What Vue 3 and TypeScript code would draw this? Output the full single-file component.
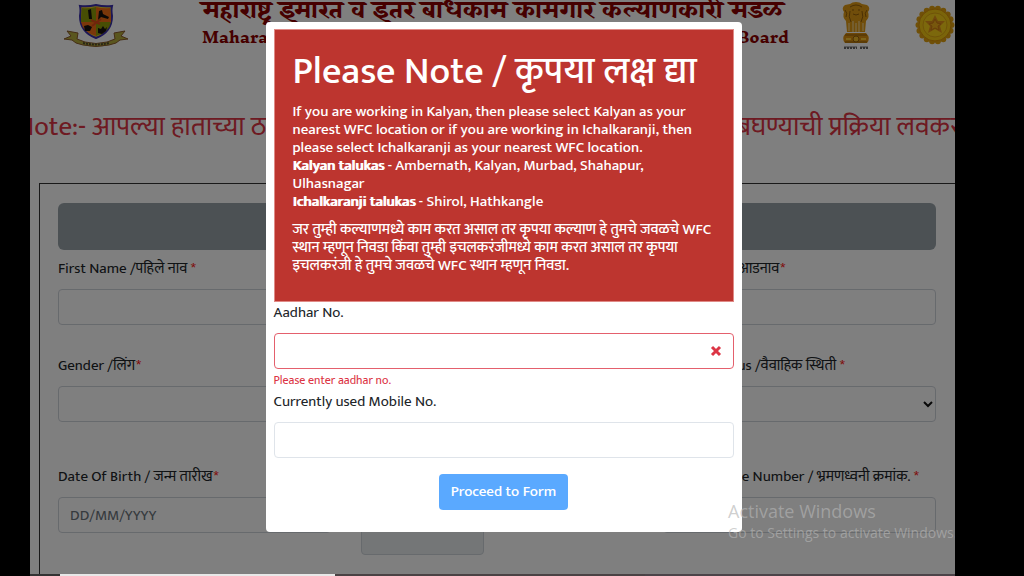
<script setup lang="ts">
import { ref } from 'vue'

interface Field {
  id: string
  label: string
  space: boolean
  kind: 'text' | 'select' | 'action'
  placeholder?: string
}

const rows: Field[][] = [
  [
    { id: 'first', label: 'First Name /पहिले नाव', space: true, kind: 'text' },
    { id: 'middle', label: 'Middle Name /वडिलांचे नाव', space: false, kind: 'text' },
    { id: 'last', label: 'Last Name /आडनाव', space: false, kind: 'text' },
  ],
  [
    { id: 'gender', label: 'Gender /लिंग', space: false, kind: 'select' },
    { id: 'age', label: 'Age /वय', space: false, kind: 'text' },
    { id: 'marital', label: 'Marital Status /वैवाहिक स्थिती', space: true, kind: 'select' },
  ],
  [
    { id: 'dob', label: 'Date Of Birth / जन्म तारीख', space: false, kind: 'text', placeholder: 'DD/MM/YYYY' },
    { id: 'check', label: '', space: false, kind: 'action' },
    { id: 'phone', label: 'Mobile Phone Number / भ्रमणध्वनी क्रमांक.', space: true, kind: 'text' },
  ],
]

const aadhar = ref('')
const mobile = ref('')
const petals = Array.from({ length: 18 }, (_, i) => {
  const a = (i * Math.PI) / 9
  return { x: 20 + 16.5 * Math.cos(a), y: 20 + 16.5 * Math.sin(a) }
})
</script>

<template>
  <div class="screen">
    <div class="window">
      <div class="page">
        <header class="header">
          <svg class="crest" viewBox="0 0 66 44" aria-hidden="true">
            <path d="M4 27 L15 29 L14 35 L22 38 Q33 41 44 38 L52 35 L51 29 L62 27 L58 32 L65 35 L57 36 L53 39 L46 41 Q33 44 20 41 L13 39 L9 36 L1 35 L8 32Z" fill="#b5ad3c" stroke="#8a5a2a" stroke-width="1" />
            <path d="M17 2 Q25 3 33 1 Q41 3 49 2 Q48 6 49 12 Q49 28 33 34 Q17 28 17 12 Q18 6 17 2Z" fill="#e8c72c" stroke="#3a2fac" stroke-width="2" />
            <path d="M19 4 Q26 5 33 3 V18 H18 Q18 10 19 4Z" fill="#8f9c08" />
            <path d="M33 3 Q40 5 47 4 Q48 10 48 18 H33Z" fill="#f56f14" />
            <path d="M18 18 H33 V32 Q20 28 18 18Z" fill="#f56f14" />
            <path d="M33 18 H48 Q46 28 33 32Z" fill="#8f9c08" />
            <path d="M25 6 L28 5 L29 15 L26 15Z M36 7 L39 6 L40 10 L46 13 L45 15 L38 13 L35 16Z M21 22 L25 21 L29 23 L27 27 L22 27Z M35 29 V24 L38 25 L40 22 L42 25 L44 23 L43 27 L39 30Z" fill="#16110c" />
            <path d="M28 16 L37 20 M38 15 L29 22" stroke="#e04a18" stroke-width="2" />
            <path d="M20 39 Q33 42 46 39" fill="none" stroke="#544d2c" stroke-width="2" stroke-dasharray="2 1" />
          </svg>
          <div class="titles">
            <h2>महाराष्ट्र इमारत व इतर बांधकाम कामगार कल्याणकारी मंडळ</h2>
            <h3><span>Maharashtra Building And Other</span><span>Worker's Welfare Board</span></h3>
          </div>
          <svg class="emblem" viewBox="0 0 32 50" aria-hidden="true">
            <path d="M10 3 Q12 1 16 1 Q20 1 22 3 L27 4 Q31 7 28 11 Q30 16 26 20 L25 31 H7 L6 20 Q2 16 4 11 Q1 7 5 4Z" fill="#e09a14" />
            <path d="M10 6 Q16 2 22 6 M12 9 H14 M18 9 H20 M13 13 Q16 15 19 13 M5 9 Q8 12 6 16 M27 9 Q24 12 26 16 M10 10 Q8 16 11 21 M22 10 Q24 16 21 21" fill="none" stroke="#96600a" stroke-width="1" />
            <path d="M9 22 V30 M13 20 V31 M16 22 V31 M19 20 V31 M23 22 V30" stroke="#f5dfa8" stroke-width="1" />
            <path d="M6 32 H26 Q31 37 27 42 H5 Q1 37 6 32Z" fill="#dc900e" />
            <path d="M5 34 H27 M5 41 H27" stroke="#96600a" />
            <circle cx="16" cy="38" r="3" fill="#f0b828" stroke="#96600a" />
            <path d="M6 38 H11 M21 38 H26" stroke="#f8c838" stroke-width="2" />
            <path d="M4 46 H17 M20 46 H28" stroke="#777" stroke-width="1" />
            <path d="M4 47 H17 M20 47 H28" stroke="#666" stroke-width="2" stroke-dasharray="2 1" />
          </svg>
          <svg class="seal" viewBox="0 0 40 40" aria-hidden="true">
            <circle v-for="(p, i) in petals" :key="i" :cx="p.x" :cy="p.y" r="3" fill="#e0a010" />
            <circle cx="20" cy="20" r="16" fill="#f5c814" stroke="#d8900a" />
            <circle cx="20" cy="20" r="12" fill="#f8d018" stroke="#e0a812" />
            <path d="M20 10 L23 16 L30 16 L25 21 L27 28 L20 24 L13 28 L15 21 L10 16 L17 16Z" fill="#e0901a" />
            <path d="M20 14 L22 18 L26 19 L23 21 L24 25 L20 23 L16 25 L17 21 L14 19 L18 18Z" fill="#eeae1a" stroke="#cf7c14" stroke-width="1" />
          </svg>
        </header>

        <div class="ticker">
          <span class="ticker-start">Note:- आपल्या हाताच्या ठशांची</span>
          <span class="ticker-end">बघण्याची प्रक्रिया लवकरात</span>
        </div>

        <form class="form" @submit.prevent>
          <div class="bar"></div>
          <div v-for="(row, r) in rows" :key="r" class="row">
            <div v-for="f in row" :key="f.id" class="field">
              <template v-if="f.kind === 'action'">
                <button class="check" type="button" disabled aria-label="Check"></button>
              </template>
              <template v-else>
                <label :for="f.id">{{ f.label }}<i v-if="f.space">&nbsp;</i><i>*</i></label>
                <span v-if="f.kind === 'select'" class="select">
                  <select :id="f.id"></select>
                  <svg viewBox="0 0 10 8" aria-hidden="true"><path d="M1 2 L5 6 L9 2" /></svg>
                </span>
                <input v-else :id="f.id" type="text" :placeholder="f.placeholder" />
              </template>
            </div>
          </div>
        </form>
      </div>

      <div class="backdrop">
        <section class="modal" role="dialog" aria-modal="true" aria-labelledby="note-title">
          <div class="note">
            <h1 id="note-title">Please Note / कृपया लक्ष द्या</h1>
            <p>
              If you are working in Kalyan, then please select Kalyan as your nearest WFC location or if you are working
              in Ichalkaranji, then please select Ichalkaranji as your nearest WFC location.<br />
              <b>Kalyan talukas</b> - Ambernath, Kalyan, Murbad, Shahapur, Ulhasnagar<br />
              <b>Ichalkaranji talukas</b> - Shirol, Hathkangle
            </p>
            <p>
              जर तुम्ही कल्याणमध्ये काम करत असाल तर कृपया कल्याण हे तुमचे जवळचे WFC स्थान म्हणून निवडा किंवा तुम्ही
              इचलकरंजीमध्ये काम करत असाल तर कृपया इचलकरंजी हे तुमचे जवळचे WFC स्थान म्हणून निवडा.
            </p>
          </div>
          <form class="ask" @submit.prevent>
            <label for="aadhar">Aadhar No.</label>
            <span class="invalid">
              <input id="aadhar" v-model="aadhar" type="text" aria-describedby="aadhar-error" />
              <svg viewBox="0 0 12 12" aria-hidden="true"><path d="M2 2 L10 10 M10 2 L2 10" /></svg>
            </span>
            <small id="aadhar-error">Please enter aadhar no.</small>
            <label for="mobile">Currently used Mobile No.</label>
            <input id="mobile" v-model="mobile" type="text" />
            <button type="submit">Proceed to Form</button>
          </form>
        </section>
      </div>

      <div class="watermark">
        <div class="wm-title">Activate Windows</div>
        <div class="wm-text">Go to Settings to activate Windows.</div>
      </div>
    </div>
    <div class="taskbar"><span></span><span></span><span></span><span></span></div>
  </div>
</template>

<style>
body {
  background: #000;
}
</style>

<style scoped>
* {
  box-sizing: border-box;
}
.screen {
  height: 100vh;
  margin: 0 69px 0 30px;
  display: flex;
  flex-direction: column;
  overflow: hidden;
  font-family: Mukta, 'Noto Sans', sans-serif;
  font-size: 15px;
  line-height: 22px;
  color: #212529;
}
.window {
  position: relative;
  flex: 1;
  min-height: 0;
  overflow: hidden;
  background: #fff;
}
.header {
  display: flex;
  align-items: flex-start;
  height: 92px;
}
.crest {
  flex: none;
  width: 66px;
  height: 44px;
  margin: 4px 0 0 33px;
}
.titles {
  flex: none;
  margin-left: 73px;
  padding-right: 8px;
  color: #8c0000;
  font-family: 'Inknut Antiqua', 'Liberation Serif', serif;
  white-space: nowrap;
}
h2,
h3 {
  margin: 0;
  font-weight: 700;
}
h2 {
  font-size: 20px;
  line-height: 28px;
  margin-top: -4px;
}
h3 {
  display: flex;
  justify-content: space-between;
  margin-right: -6px;
  font-size: 15px;
  line-height: 26px;
}
.emblem {
  flex: none;
  width: 32px;
  height: 50px;
  margin: 1px 0 0 49px;
}
.seal {
  flex: none;
  width: 40px;
  height: 40px;
  margin: 5px 0 0 43px;
}
.ticker {
  display: flex;
  justify-content: space-between;
  height: 91px;
  padding-top: 15px;
  overflow: hidden;
  white-space: nowrap;
  color: #dc3545;
  font-size: 27px;
  line-height: 40px;
}
.ticker-start {
  margin-left: -14px;
}
.ticker-end {
  margin-right: -28px;
}
.form {
  margin-left: 9px;
  padding: 19px 19px 40px 18px;
  border: 1px solid #333;
  border-right: 0;
}
.bar {
  height: 47px;
  border-radius: 6px;
  background: #98a2a9;
}
.row {
  display: grid;
  grid-template-columns: repeat(3, 1fr);
  gap: 30px;
  margin-top: 30px;
}
.bar + .row {
  margin-top: 8px;
}
.row:last-child {
  margin-top: 44px;
}
.field {
  display: flex;
  flex-direction: column;
  gap: 9px;
  min-width: 0;
}
.field label {
  white-space: nowrap;
}
.field i {
  font-style: normal;
  color: #f00;
}
input,
select {
  width: 100%;
  height: 36px;
  padding: 0 11px;
  border: 1px solid #ced4da;
  border-radius: 4px;
  background: #fff;
  color: #495057;
  font: inherit;
}
input::placeholder {
  color: #6c757d;
}
select {
  appearance: none;
}
.select,
.invalid {
  position: relative;
  display: block;
}
.select svg {
  position: absolute;
  right: 3px;
  top: 14px;
  width: 10px;
  height: 8px;
  fill: none;
  stroke: #111;
  stroke-width: 2;
}
.check {
  width: 123px;
  height: 36px;
  margin-top: 53px;
  border: 1px solid #ced4da;
  border-radius: 4px;
  background: #e9ecef;
}
.backdrop {
  position: absolute;
  inset: 0;
  display: flex;
  align-items: flex-start;
  justify-content: center;
  padding: 22px 0 0 22px;
  background: rgba(0, 0, 0, 0.5);
}
.modal {
  width: 476px;
  padding: 7px 8px 22px;
  border-radius: 4px;
  background: #fff;
}
.note {
  padding: 19px 18px 26px;
  border: 1px solid #e08a86;
  background: #bd352f;
  color: #fff;
  font-weight: 500;
  line-height: 18px;
}
.note h1 {
  margin: 0 0 8px;
  font-size: 38px;
  font-weight: 500;
  line-height: 46px;
  white-space: nowrap;
}
.note p {
  margin: 0 0 10px;
}
.note p:last-child {
  margin-bottom: 0;
}
.note b {
  font-weight: 500;
  text-shadow: 1px 0 0 #fff;
}
.ask {
  display: flex;
  flex-direction: column;
}
.ask input {
  border-color: #dfe4ea;
}
.ask .invalid input {
  border-color: #e4606d;
}
.invalid svg {
  position: absolute;
  right: 12px;
  top: 12px;
  width: 12px;
  height: 12px;
  stroke: #dc3545;
  stroke-width: 3;
}
.ask label {
  margin-bottom: 9px;
}
.ask small {
  color: #dc3545;
  font-size: 12px;
}
.ask button {
  align-self: center;
  height: 36px;
  margin-top: 16px;
  padding: 0 12px;
  border: 0;
  border-radius: 4px;
  background: #5aa9ff;
  color: #fff;
  font: inherit;
  font-weight: 500;
}
.watermark {
  position: absolute;
  right: 0;
  bottom: 30px;
  width: 227px;
  color: rgba(180, 180, 180, 0.65);
  font-family: 'Open Sans', 'Noto Sans', sans-serif;
  white-space: nowrap;
}
.wm-title {
  font-size: 18px;
}
.wm-text {
  font-size: 14px;
}
.taskbar {
  display: flex;
  height: 2px;
}
.taskbar span:nth-child(1) {
  width: 30px;
  background: #333;
}
.taskbar span:nth-child(2) {
  width: 275px;
  background: #e8e8e8;
}
.taskbar span:nth-child(3) {
  flex: 1;
  background: #4a4244;
}
.taskbar span:nth-child(4) {
  flex: 1;
  background: #4c4449;
}
</style>
